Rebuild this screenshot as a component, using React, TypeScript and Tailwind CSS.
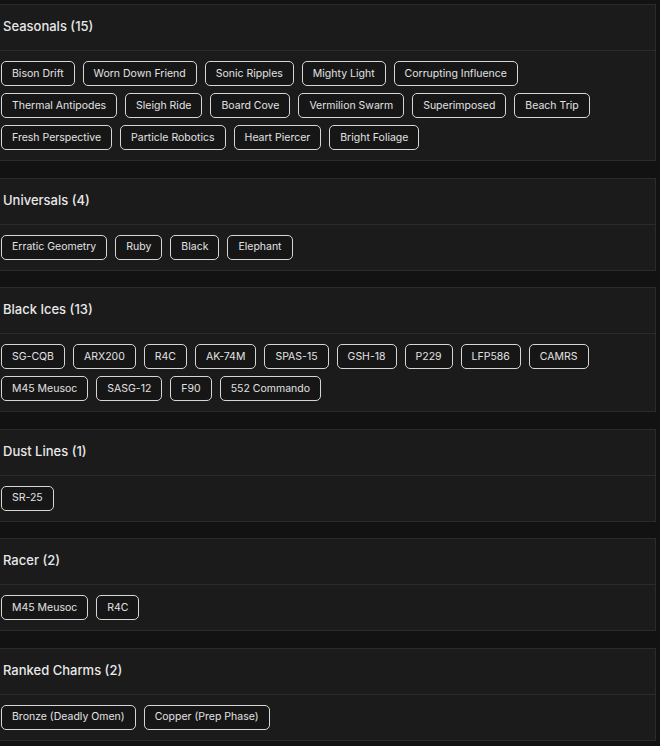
import React from "react";

interface Group {
  title: string;
  items: string[];
}

const groups: Group[] = [
  {
    title: "Seasonals",
    items: [
      "Bison Drift",
      "Worn Down Friend",
      "Sonic Ripples",
      "Mighty Light",
      "Corrupting Influence",
      "Thermal Antipodes",
      "Sleigh Ride",
      "Board Cove",
      "Vermilion Swarm",
      "Superimposed",
      "Beach Trip",
      "Fresh Perspective",
      "Particle Robotics",
      "Heart Piercer",
      "Bright Foliage",
    ],
  },
  {
    title: "Universals",
    items: ["Erratic Geometry", "Ruby", "Black", "Elephant"],
  },
  {
    title: "Black Ices",
    items: [
      "SG-CQB",
      "ARX200",
      "R4C",
      "AK-74M",
      "SPAS-15",
      "GSH-18",
      "P229",
      "LFP586",
      "CAMRS",
      "M45 Meusoc",
      "SASG-12",
      "F90",
      "552 Commando",
    ],
  },
  { title: "Dust Lines", items: ["SR-25"] },
  { title: "Racer", items: ["M45 Meusoc", "R4C"] },
  {
    title: "Ranked Charms",
    items: ["Bronze (Deadly Omen)", "Copper (Prep Phase)"],
  },
];

export default function App() {
  return (
    <div
      className="min-h-[746px] w-[660px] overflow-hidden bg-[#121212] pt-1"
      style={{ fontFamily: "Inter, 'Open Sans', sans-serif" }}
    >
      {groups.map((group) => (
        <section
          key={group.title}
          className="-ml-px mb-[16.5px] w-[657px] border border-[#2b2b2b] bg-[#1b1b1b]"
        >
          {/* Header */}
          <div className="flex h-[46px] items-center border-b border-[#2b2b2b] pl-[3px] pb-px">
            <h2 className="text-[13px] font-medium text-[#e8e8e8]">
              {group.title} ({group.items.length})
            </h2>
          </div>

          {/* Chips */}
          <div className="flex flex-wrap gap-x-2 gap-y-[7px] py-[10px] pl-[1px] pr-4">
            {group.items.map((item, i) => (
              <span
                key={`${item}-${i}`}
                className="flex h-[25px] items-center rounded-[5px] border border-[#d6d6d6] bg-[#161616] px-[10px] text-[10.5px] text-[#e2e2e2]"
              >
                {item}
              </span>
            ))}
          </div>
        </section>
      ))}
    </div>
  );
}
